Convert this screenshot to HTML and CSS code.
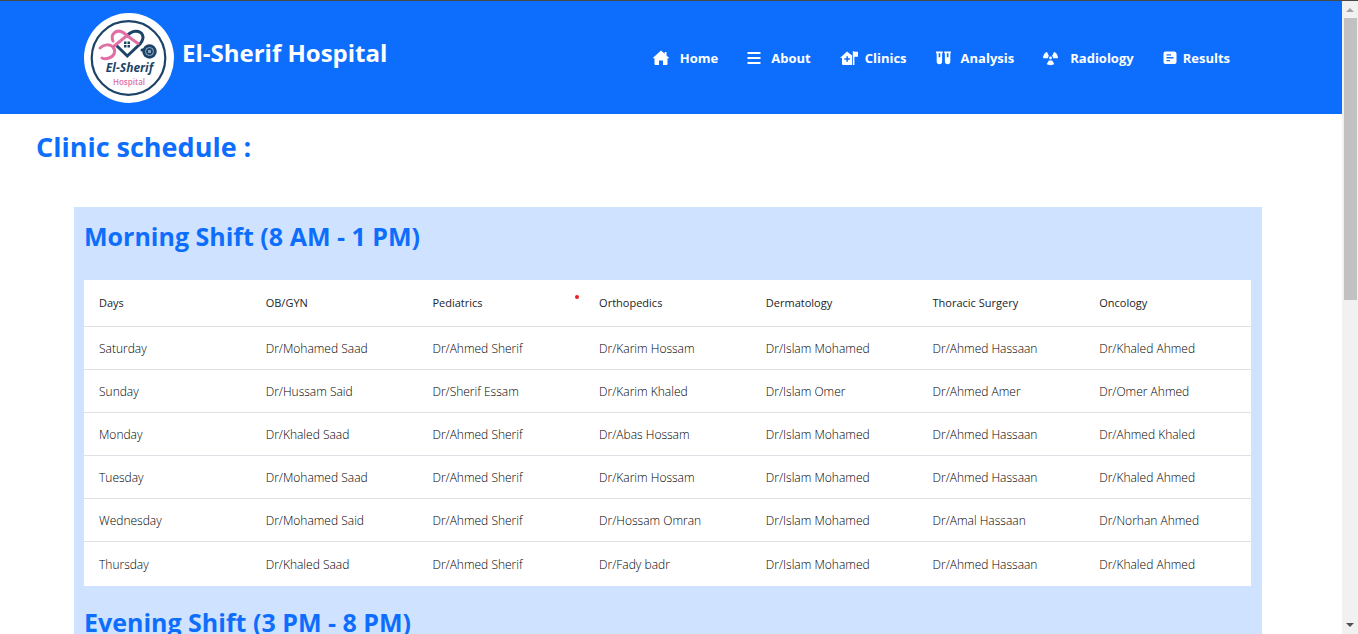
FILE: index.html
```
<!DOCTYPE html>
<html lang="en">
<head>
<meta charset="utf-8">
<title>El-Sherif Hospital</title>
<link rel="stylesheet" href="styles.css">
</head>
<body>
<div class="window">
<div class="page">
  <header class="topbar">
    <a class="brand" href="#">
      <svg class="logo" viewBox="0 0 90 90" role="img" aria-label="El-Sherif Hospital logo">
        <circle cx="45" cy="45" r="45" fill="#fff"/>
        <circle cx="44.500" cy="45" r="36.800" fill="none" stroke="#1d4468" stroke-width="2.200"/>
        <g fill="none" stroke-width="3" stroke-linecap="round">
          <path d="M33 33L43.300 43L56 31C62 24 58 18 51.500 18.300C48 18.500 45 20.500 43 23M58 37h4" stroke="#1d4468"/>
          <path d="M29 28C26 21 32 17 37 18.500C41 20 43 23 54 30.500" stroke="#e06fa4"/>
          <path d="M43 22.500L29 34M16 35C20 31 26 31 29 34C33 39 29 44 25 45C22 46 20 46 18 45" stroke="#e06fa4"/>
        </g>
        <g fill="#1d4468"><path d="M40 28.500h2.500V31H40zM43.500 28.500H46V31h-2.500zM40 32h2.500v2.500H40zM43.500 32H46v2.500h-2.500z"/><circle cx="65.500" cy="38.500" r="7.200"/></g>
        <circle cx="65.500" cy="38.500" r="4" fill="none" stroke="#b4c7d8" stroke-width="0.800"/>
        <path d="M64 37h3v3h-3z" fill="#8aa5bd"/>
        <text class="logo-name" x="45.500" y="58.500" text-anchor="middle">El-Sherif</text>
        <text class="logo-sub" x="45" y="72" text-anchor="middle">Hospital</text>
      </svg>
      <span class="brand-name">El-Sherif Hospital</span>
    </a>
    <nav class="nav" aria-label="Main">
      <a class="nav-link" href="#"><svg class="icon icon-wide" viewBox="0 0 18 16"><path d="M9 0.500L0.500 8.200h2V14a1 1 0 0 0 1 1H7v-4.500h4V15h3.500a1 1 0 0 0 1-1V8.200h2L14.500 5.400V2H12.700v1.800z"/></svg>Home</a>
      <a class="nav-link" href="#"><svg class="icon icon-menu" viewBox="0 0 14 16"><path d="M0.500 2h13v2h-13zM0.500 7h13v2h-13zM0.500 12h13v2h-13z"/></svg>About</a>
      <a class="nav-link" href="#"><svg class="icon icon-clinic" viewBox="0 0 19 16"><path fill-rule="evenodd" d="M7 1.500L0 8h2v6a1 1 0 0 0 1 1h9V5.500zM6.400 6.200h1.500v2h2v1.500h-2v2H6.400v-2h-2V8.200h2zM12.800 1.200h1.600v.6H18v5h-3.600V15h-1.600z"/></svg>Clinics</a>
      <a class="nav-link" href="#"><svg class="icon icon-vials" viewBox="0 0 15 16"><path fill-rule="evenodd" d="M0 1.500h6.700V3.200h-.6v8.300a2.700 2.700 0 0 1-5.400 0V3.200H0zM2.600 3.300v4h1.700v-4zM8.200 1.500h6.700V3.200h-.6v8.300a2.700 2.700 0 0 1-5.400 0V3.200h-.7zM10.800 3.300v4h1.700v-4z"/></svg>Analysis</a>
      <a class="nav-link" href="#"><svg class="icon icon-rad" viewBox="0 0 15 16"><path d="M4 2L5.900 6a3 3 0 0 0-1 2.300H.8C0 8.300 0 7.500.2 6.500A7 7 0 0 1 3 2.300C3.400 2 3.700 1.700 4 2zM11 2L9.100 6a3 3 0 0 1 1 2.300h4.100c.8 0 .8-.8.6-1.800A7 7 0 0 0 12 2.300c-.4-.3-.7-.6-1-.3zM5.800 10.500h3.400l2 3.500c-1.500 1.500-5.900 1.500-7.400 0z"/><circle cx="7.500" cy="8" r="1.400"/></svg>Radiology</a>
      <a class="nav-link" href="#"><svg class="icon icon-results" viewBox="0 0 14 16"><path fill-rule="evenodd" d="M2.500 1.500h8.500A2.500 2.500 0 0 1 13.500 4v8a2 2 0 0 1-2 2h-9a2 2 0 0 1-2-2V3.500a2 2 0 0 1 2-2zM3.500 4.200v1.300h4.500V4.200zM3.500 7.100v1.300h7V7.100zM3.500 10v1.300H7V10z"/></svg>Results</a>
    </nav>
  </header>
  <main>
    <h1 class="page-title">Clinic schedule :</h1>
    <section class="schedule">
      <h2 class="shift-title">Morning Shift (8 AM - 1 PM)</h2>
      <table class="shift-table">
        <thead>
          <tr><th scope="col">Days</th><th scope="col">OB/GYN</th><th scope="col" class="marked">Pediatrics<span class="marker"></span></th><th scope="col">Orthopedics</th><th scope="col">Dermatology</th><th scope="col">Thoracic Surgery</th><th scope="col">Oncology</th></tr>
        </thead>
        <tbody>
          <tr><td>Saturday</td><td>Dr/Mohamed Saad</td><td>Dr/Ahmed Sherif</td><td>Dr/Karim Hossam</td><td>Dr/Islam Mohamed</td><td>Dr/Ahmed Hassaan</td><td>Dr/Khaled Ahmed</td></tr>
          <tr><td>Sunday</td><td>Dr/Hussam Said</td><td>Dr/Sherif Essam</td><td>Dr/Karim Khaled</td><td>Dr/Islam Omer</td><td>Dr/Ahmed Amer</td><td>Dr/Omer Ahmed</td></tr>
          <tr><td>Monday</td><td>Dr/Khaled Saad</td><td>Dr/Ahmed Sherif</td><td>Dr/Abas Hossam</td><td>Dr/Islam Mohamed</td><td>Dr/Ahmed Hassaan</td><td>Dr/Ahmed Khaled</td></tr>
          <tr><td>Tuesday</td><td>Dr/Mohamed Saad</td><td>Dr/Ahmed Sherif</td><td>Dr/Karim Hossam</td><td>Dr/Islam Mohamed</td><td>Dr/Ahmed Hassaan</td><td>Dr/Khaled Ahmed</td></tr>
          <tr><td>Wednesday</td><td>Dr/Mohamed Said</td><td>Dr/Ahmed Sherif</td><td>Dr/Hossam Omran</td><td>Dr/Islam Mohamed</td><td>Dr/Amal Hassaan</td><td>Dr/Norhan Ahmed</td></tr>
          <tr><td>Thursday</td><td>Dr/Khaled Saad</td><td>Dr/Ahmed Sherif</td><td>Dr/Fady badr</td><td>Dr/Islam Mohamed</td><td>Dr/Ahmed Hassaan</td><td>Dr/Khaled Ahmed</td></tr>
        </tbody>
      </table>
      <h2 class="shift-title">Evening Shift (3 PM - 8 PM)</h2>
    </section>
  </main>
</div>
<div class="scrollbar" aria-hidden="true">
  <svg class="arrow arrow-up" viewBox="0 0 16 17"><path d="M8 7l4 4H4z"/></svg>
  <div class="track"><div class="thumb"></div></div>
  <svg class="arrow arrow-down" viewBox="0 0 16 17"><path d="M4 6h8l-4 4z"/></svg>
</div>
</div>
</body>
</html>
```
FILE: styles.css
```
* { box-sizing: border-box; }

body {
  margin: 0;
  font-family: "Segoe UI", "Open Sans", "Noto Sans", sans-serif;
  color: #212529;
  background: #fff;
}

.window {
  display: flex;
  height: 100vh;
  overflow: hidden;
  border-top: 1px solid #484848;
}

.page {
  flex: 1;
  min-width: 0;
  overflow: hidden;
}

.topbar {
  display: flex;
  align-items: center;
  justify-content: space-between;
  padding: 12px 112px 11px 84px;
  background: #0d6efd;
}

.brand {
  display: flex;
  gap: 8px;
  color: #fff;
  text-decoration: none;
}

.logo {
  width: 90px;
  height: 90px;
}

.logo-name {
  font: italic 700 12px "Open Sans", sans-serif;
  fill: #1d4468;
}

.logo-sub {
  font: 600 8px "Open Sans", sans-serif;
  fill: #e06fa4;
}

.brand-name {
  padding-top: 22px;
  font-size: 24px;
  font-weight: 700;
  line-height: 36px;
  white-space: nowrap;
}

.nav {
  display: flex;
  gap: 29px;
}

.nav-link {
  display: flex;
  align-items: center;
  gap: 10px;
  color: #fff;
  font-size: 13px;
  font-weight: 700;
  line-height: 20px;
  text-decoration: none;
}

.icon {
  width: 14px;
  height: 16px;
  fill: currentColor;
}

.icon-wide { width: 18px; }
.icon-clinic { width: 19px; margin-right: -4px; }
.icon-vials { width: 15px; }
.icon-rad { width: 15px; margin-right: 2px; }
.icon-results { margin-right: -4px; }

.page-title {
  margin: 0;
  padding: 13px 36px 0;
  color: #0d6efd;
  font-size: 27px;
  font-weight: 700;
  line-height: 40px;
}

.schedule {
  margin: 40px 80px 0 74px;
  padding: 1px 11px 40px 10px;
  background: #cfe2ff;
}

.shift-title {
  margin: 0;
  padding: 8px 0 24px;
  color: #0d6efd;
  font-size: 25px;
  font-weight: 700;
  line-height: 40px;
}

.shift-table + .shift-title { padding-top: 16px; }

.shift-table {
  width: 100%;
  table-layout: fixed;
  border-collapse: separate;
  border-spacing: 0;
  background: #fff;
  font-size: 12px;
  line-height: 18px;
}

.shift-table th,
.shift-table td {
  height: 43px;
  padding: 0 15px;
  border-bottom: 1px solid #dee2e6;
  text-align: left;
  vertical-align: middle;
  white-space: nowrap;
}

.shift-table th {
  height: 47px;
  font-size: 11px;
  font-weight: 400;
}

.shift-table td {
  padding-top: 2px;
  color: #000;
  font-weight: 300;
}

.shift-table tr:last-child td {
  height: 44px;
  border-bottom: 0;
}

.shift-table thead tr th { border-bottom: 1px solid #dee2e6; }

.marked { position: relative; }

.marker {
  position: absolute;
  top: 15px;
  right: 5px;
  width: 4px;
  height: 4px;
  border-radius: 50%;
  background: #ed1c24;
}

.scrollbar {
  display: flex;
  flex-direction: column;
  width: 16px;
  background: #f1f1f1;
}

.arrow {
  width: 16px;
  height: 17px;
}

.arrow-up { fill: #a3a3a3; }
.arrow-down { fill: #505050; }

.track {
  flex: 1;
  padding: 0 1px 0 2px;
}

.thumb {
  height: 47%;
  background: #c1c1c1;
}
```
